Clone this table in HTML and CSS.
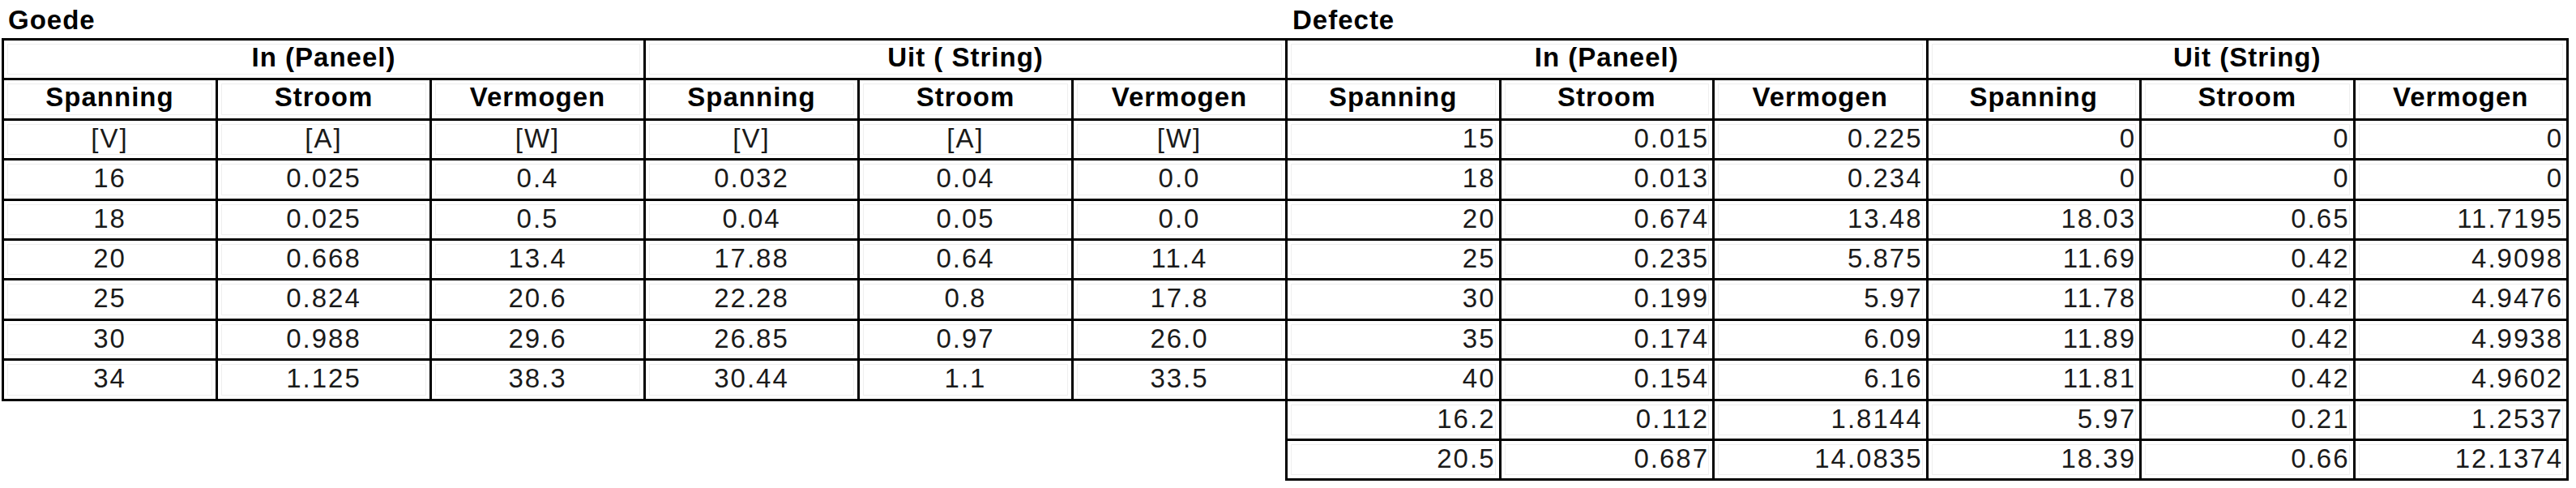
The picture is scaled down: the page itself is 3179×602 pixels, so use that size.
FILE: index.html
```html
<!DOCTYPE html>
<html lang="nl">
<head>
<meta charset="utf-8">
<title>Goede en defecte panelen</title>
<link rel="stylesheet" href="styles.css">
</head>
<body>
<div class="sheet">
  <section class="block block-good">
    <h2 class="title">Goede</h2>
    <table class="grid grid-center">
      <thead>
        <tr class="hdr"><th colspan="3">In (Paneel)</th><th colspan="3">Uit ( String)</th></tr>
        <tr class="hdr"><th>Spanning</th><th>Stroom</th><th>Vermogen</th><th>Spanning</th><th>Stroom</th><th>Vermogen</th></tr>
      </thead>
      <tbody>
        <tr><td>[V]</td><td>[A]</td><td>[W]</td><td>[V]</td><td>[A]</td><td>[W]</td></tr>
        <tr><td>16</td><td>0.025</td><td>0.4</td><td>0.032</td><td>0.04</td><td>0.0</td></tr>
        <tr><td>18</td><td>0.025</td><td>0.5</td><td>0.04</td><td>0.05</td><td>0.0</td></tr>
        <tr><td>20</td><td>0.668</td><td>13.4</td><td>17.88</td><td>0.64</td><td>11.4</td></tr>
        <tr><td>25</td><td>0.824</td><td>20.6</td><td>22.28</td><td>0.8</td><td>17.8</td></tr>
        <tr><td>30</td><td>0.988</td><td>29.6</td><td>26.85</td><td>0.97</td><td>26.0</td></tr>
        <tr><td>34</td><td>1.125</td><td>38.3</td><td>30.44</td><td>1.1</td><td>33.5</td></tr>
      </tbody>
    </table>
  </section>
  <section class="block block-bad">
    <h2 class="title">Defecte</h2>
    <table class="grid grid-right">
      <thead>
        <tr class="hdr"><th colspan="3">In (Paneel)</th><th colspan="3">Uit (String)</th></tr>
        <tr class="hdr"><th>Spanning</th><th>Stroom</th><th>Vermogen</th><th>Spanning</th><th>Stroom</th><th>Vermogen</th></tr>
      </thead>
      <tbody>
        <tr><td>15</td><td>0.015</td><td>0.225</td><td>0</td><td>0</td><td>0</td></tr>
        <tr><td>18</td><td>0.013</td><td>0.234</td><td>0</td><td>0</td><td>0</td></tr>
        <tr><td>20</td><td>0.674</td><td>13.48</td><td>18.03</td><td>0.65</td><td>11.7195</td></tr>
        <tr><td>25</td><td>0.235</td><td>5.875</td><td>11.69</td><td>0.42</td><td>4.9098</td></tr>
        <tr><td>30</td><td>0.199</td><td>5.97</td><td>11.78</td><td>0.42</td><td>4.9476</td></tr>
        <tr><td>35</td><td>0.174</td><td>6.09</td><td>11.89</td><td>0.42</td><td>4.9938</td></tr>
        <tr><td>40</td><td>0.154</td><td>6.16</td><td>11.81</td><td>0.42</td><td>4.9602</td></tr>
        <tr><td>16.2</td><td>0.112</td><td>1.8144</td><td>5.97</td><td>0.21</td><td>1.2537</td></tr>
        <tr><td>20.5</td><td>0.687</td><td>14.0835</td><td>18.39</td><td>0.66</td><td>12.1374</td></tr>
      </tbody>
    </table>
  </section>
</div>
</body>
</html>
```
FILE: styles.css
```css
html, body {
  margin: 0;
  padding: 0;
  background: #fff;
}

body {
  font-family: "Liberation Sans", Arial, sans-serif;
  color: #111;
}

.sheet {
  display: flex;
  align-items: flex-start;
  padding-left: 2px;
}

.block-bad {
  margin-left: -3px;
}

.title {
  margin: 0;
  height: 44px;
  padding-top: 3px;
  line-height: 44px;
  font-size: 33px;
  font-weight: bold;
  letter-spacing: 1px;
  color: #000;
}

.block-good .title {
  padding-left: 8px;
}

.block-bad .title {
  padding-left: 9px;
}

.grid {
  border-collapse: separate;
  border-spacing: 0;
  table-layout: fixed;
  border-top: 3px solid #000;
  border-left: 3px solid #000;
}

.block-good .grid {
  width: 1587px;
}

.block-bad .grid {
  width: 1584px;
}

.grid tr {
  height: 49.4px;
}

.grid th,
.grid td {
  border-right: 3px solid #000;
  border-bottom: 3px solid #000;
  padding: 0 4px 2px;
  font-size: 33px;
  line-height: 1.1;
  white-space: nowrap;
  overflow: hidden;
  vertical-align: middle;
  box-shadow: inset 0 0 0 4px #fff, inset 0 0 0 5px #efefef;
}

.grid th {
  font-weight: bold;
  letter-spacing: 1px;
  color: #000;
  text-align: center;
  padding-bottom: 5px;
}

.grid td {
  letter-spacing: 2px;
  color: #1a1a1a;
}

.grid-center td {
  text-align: center;
}

.grid-right td {
  text-align: right;
  padding-right: 4px;
}
```
